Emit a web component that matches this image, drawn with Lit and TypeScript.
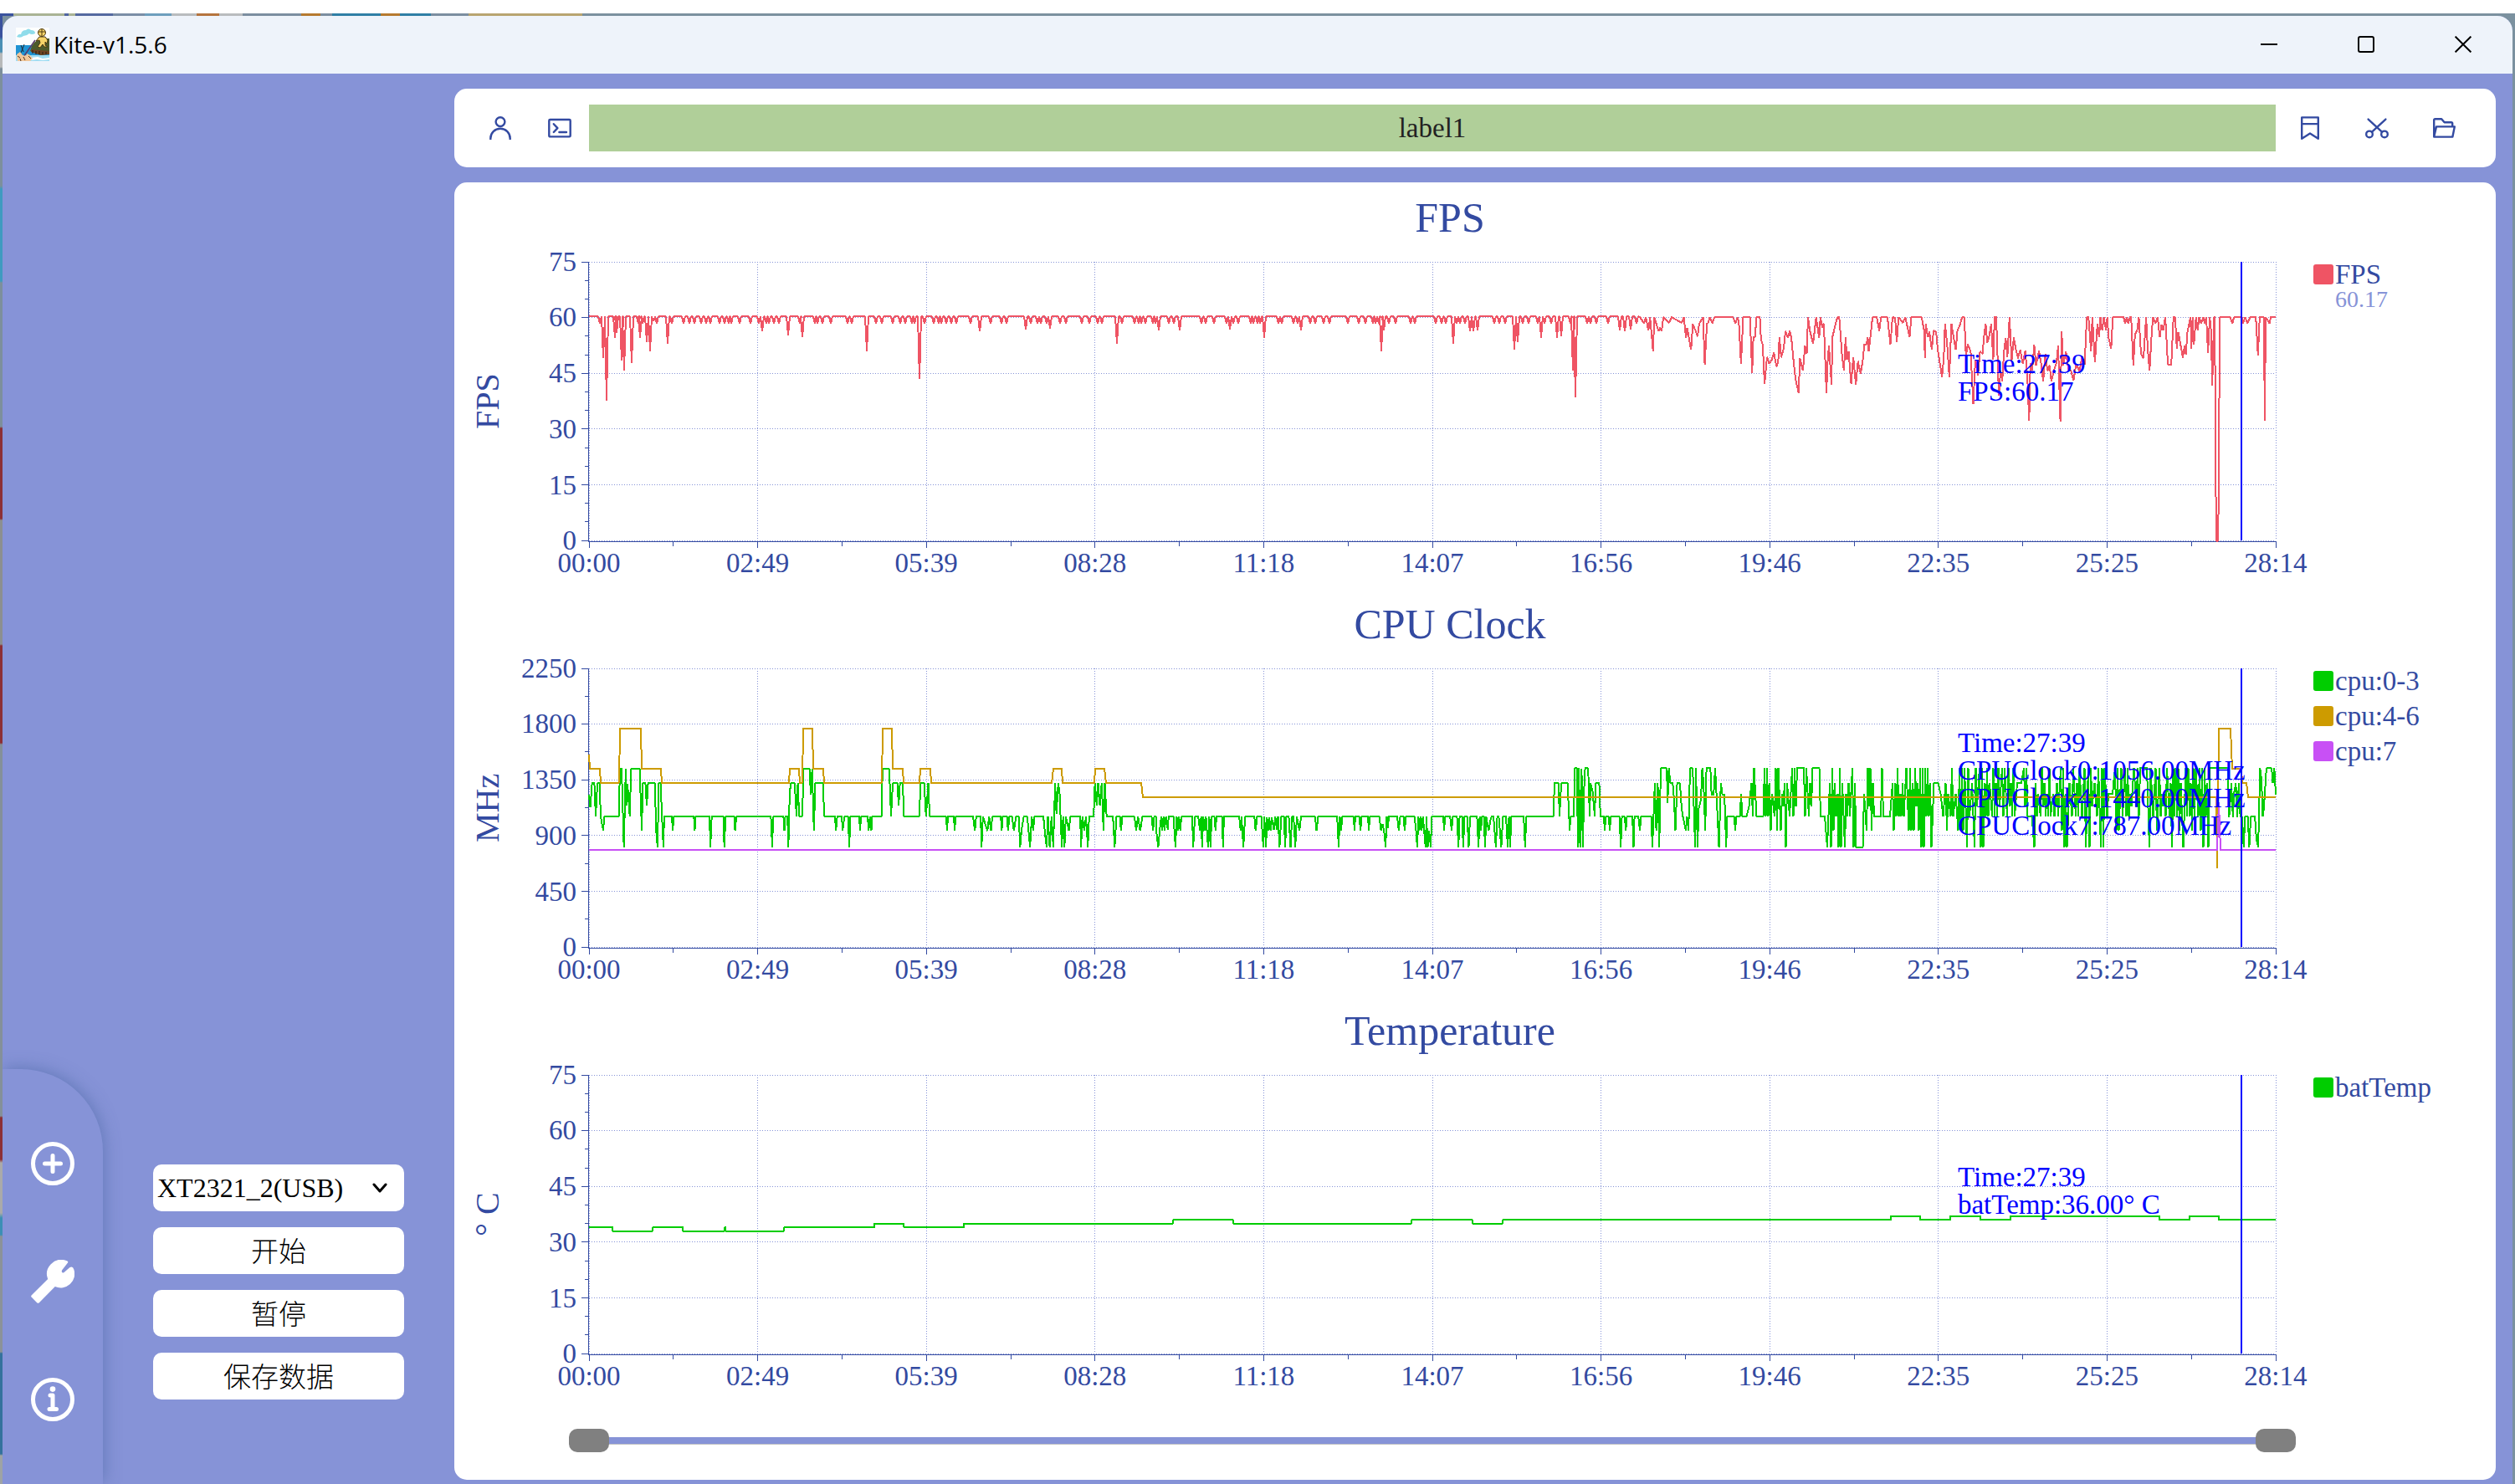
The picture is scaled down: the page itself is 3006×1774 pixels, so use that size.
import { LitElement, html, css, svg, nothing } from "lit";
import { customElement, property } from "lit/decorators.js";

type Point = [number, number];

interface Series {
  name: string;
  color: string;
  points: Point[];
  value?: string;
}

interface ChartSpec {
  title: string;
  unit: string;
  yLabels: string[];
  minorPerStep: number;
  series: Series[];
  readout: string[];
}

/* Every trace is kept in plot units: 2016 across, 333 down. */
const PLOT_W = 2016;
const PLOT_H = 333;
const CURSOR_X = 1975;
const TIMES = ["00:00", "02:49", "05:39", "08:28", "11:18", "14:07", "16:56", "19:46", "22:35", "25:25", "28:14"];

/* Reads "x,y x,y ..." and maps it into plot units. */
function trace(text: string, scaleX: number, offsetX: number, scaleY = 3, offsetY = 0): Point[] {
  return text
    .trim()
    .split(/\s+/)
    .map((pair) => {
      const [x, y] = pair.split(",").map(Number);
      return [x / scaleX + offsetX, y / scaleY + offsetY] as Point;
    });
}

/* A flat line at the frame cap with short drops; "x" alone is a small drop, "x:v" falls to v. */
const FPS_CAP = 60.3;
const fpsY = (v: number) => PLOT_H * (1 - v / 75);
function drops(text: string): Point[] {
  const out: Point[] = [[0, fpsY(FPS_CAP)]];
  for (const item of text.trim().split(/\s+/)) {
    const [x, v] = item.split(":").map(Number);
    out.push([x - 2, fpsY(FPS_CAP)], [x, fpsY(v || 58.4)], [x + 2, fpsY(FPS_CAP)]);
  }
  return out;
}

const fpsEarly = drops(`
  13 17:49 21:37.7 31:54.6 33:56 39:48.4 42:45.8 51:47.8 59 61:54.6 64 69:53.5 73:51 77:59 81 94:53 99 113 120 126 134 140 145
  156 162 167 170 180 193 203 207:56.3 212 215 221 227 238:55.2 252 255:54.7 270 273 279 289 309 314
  332:51 343 350 363 372 378 386 389 395:43.4 401 412 418 421 427 433 439 456 467:56.3 480 493 499
  522:56.7 528 536 540 547 551:57 563 570 589 598 608 613 631:53 637 652 657 660 665 674 677 681:56.5
  693 699 706:56.5 732 737 747 762 766:56.7 770 776 791 794 799 802 807:54.6 824 828 842 847 851:56.5
  862 868 878 885 907 920 928 937 940 944 947:51 950:56.5 956 964 982 987 1012 1019 1024 1033:53 1037
  1041 1047 1053:56.3 1057:56.3 1062:56.5 1082 1088 1095 1106:51.4 1110:53.3 1116 1123 1134 1138:54.6
  1142 1150 1157:54.6 1162:55 1173 1176:45.8 1179:38.5 1193 1197 1204 1218 1232:56.5 1238:56.3
  1245:56.7 1252
`);

const fpsLate = trace(`
  0,297 10,320 14,297 20,345 24,297 31,420 34,297 44,348 48,335 51,348 55,297 69,318 74,297 98,318
  103,297 108,372 111,335 115,372 120,415 124,322 131,348 135,367 139,322 148,297 152,468 157,322
  160,318 164,297 170,320 175,297 218,297 224,320 229,297 232,320 237,465 242,297 258,297 263,497
  266,370 270,368 273,297 281,297 284,380 288,395 292,538 298,440 303,465 309,450 314,425 320,475
  324,460 327,370 331,442 337,410 341,347 347,372 351,347 355,372 359,440 365,522 372,570 375,445
  382,490 387,400 391,430 394,297 398,345 406,393 413,297 420,372 423,297 427,335 431,320 437,570
  440,455 443,400 449,540 451,370 458,325 463,297 467,297 474,440 478,488 482,370 485,450 489,420
  495,538 500,440 506,540 511,455 517,500 522,455 526,395 531,395 534,370 536,420 540,370 545,297
  555,297 561,348 565,297 580,297 587,395 592,297 598,300 602,388 606,297 616,318 622,297 632,370
  636,297 660,297 666,345 668,445 670,322 675,370 678,348 684,415 688,345 694,350 698,415 708,513
  712,440 715,320 720,395 725,513 730,320 735,370 740,415 744,345 750,325 755,297 760,297 764,440
  768,395 775,420 781,610 786,450 792,508 797,420 803,430 806,370 810,320 814,390 818,370 823,322
  828,450 831,297 835,297 841,580 845,490 849,528 853,420 857,372 861,440 866,297 871,455 876,370
  881,415 886,445 891,415 897,465 903,418 908,520 912,670 915,463 919,490 924,397 928,470 935,418
  940,463 945,528 950,430 955,490 960,470 964,528 970,490 976,460 980,400 985,673 988,348 992,470
  998,420 1004,485 1010,490 1016,525 1022,465 1030,490 1036,440 1042,468 1047,297 1051,297 1057,420
  1060,297 1066,460 1072,320 1076,370 1079,297 1083,345 1087,297 1092,345 1095,297 1098,370 1104,412
  1108,297 1133,297 1137,320 1141,297 1144,320 1148,297 1151,297 1156,470 1160,360 1165,345 1169,297
  1174,430 1180,445 1186,297 1190,415 1194,490 1199,360 1202,297 1208,320 1213,297 1218,370 1222,325
  1226,345 1231,297 1237,468 1245,468 1250,297 1254,297 1258,410 1261,350 1266,390 1272,443 1276,400
  1279,432 1283,348 1290,297 1292,410 1295,297 1298,395 1303,297 1307,345 1310,297 1315,320 1320,297
  1323,320 1327,297 1331,425 1335,297 1338,345 1341,543 1345,297 1347,297 1349,900 1351,1100
  1355,1100 1357,660 1359,297 1383,297 1388,320 1392,297 1410,297 1413,320 1418,297 1423,320
  1430,297 1443,297 1448,435 1452,297 1462,297 1464,670 1466,297 1475,320 1478,297 1490,297
`, 1.96, 1256, 3, -33);

const littleA = trace(`
  306,750 309,795 313,708 318,708 321,828 325,708 330,708 332,828 338,880 340,828 373,828 375,657
  379,657 384,938 388,657 390,790 392,710 397,828 400,657 419,657 424,880 426,708 432,708 435,790
  438,708 453,708 456,880 459,938 462,708 466,708 469,828 472,938 474,828 491,828 493,880 495,828
  540,828 542,880 544,828 575,828 577,938 580,828 606,828 608,938 611,828 630,828 632,880 635,828
  712,828 715,938 717,828 740,828 742,880 744,828 749,828 751,938 754,740 757,708 765,708 769,828
  772,708 775,828 782,828 785,657 798,657 801,750 804,657 808,880 811,708 828,708 831,828 855,828
  857,880 860,828 870,828 872,880 876,828 884,828 887,938 889,828 909,828 911,880 913,828 928,828
  930,880 933,828 936,880 938,828 959,828 961,657 976,657 980,828 984,708 994,708 997,790 1000,708
  1006,708 1009,828 1043,828 1046,708 1054,708 1058,828 1063,708 1066,828 1103,828 1105,880 1107,828
  1120,828 1122,880 1124,828 1163,828 1167,880 1170,828 1180,828 1182,940 1185,828 1195,880 1199,828
  1203,880 1206,828 1225,828 1227,880 1229,828 1239,828 1241,880 1244,828 1250,828 1254,880 1259,828
  1265,828 1268,938 1271,880 1276,828 1284,828 1290,938 1294,828 1297,880 1300,828 1320,828 1323,880
  1327,938 1330,828 1334,938 1338,828 1342,938 1346,708 1349,820 1353,708 1356,740 1361,938 1364,828
  1367,938 1370,828 1377,880 1380,828 1402,828 1404,938 1407,828 1411,880 1415,828 1419,938 1422,828
  1432,828 1435,708 1439,790 1442,708 1446,790 1450,708 1454,880 1457,708 1461,828 1475,828 1479,938
  1483,828 1491,828 1493,880 1496,828 1523,828 1527,880 1531,828 1536,880 1541,828
`, 1.8667, -164, 3, -99);

const littleB = trace(`
  73,288 102,288 107,340 111,288 117,288 119,350 124,400 129,340 134,288 137,340 142,288 145,340
  150,288 156,335 159,288 175,288 182,398 186,288 190,340 194,288 198,340 202,288 238,288 241,398
  247,288 258,288 264,340 268,288 271,398 275,288 280,340 284,288 291,398 295,288 299,400 303,288
  312,288 316,338 319,288 338,288 341,398 344,288 395,288 400,340 403,288 409,400 415,288 446,288
  450,340 455,288 469,288 476,398 479,288 485,398 488,290 492,340 496,290 500,338 504,290 511,335
  516,288 521,335 525,288 530,400 536,288 545,288 549,398 553,288 561,288 567,400 572,288 577,288
  583,398 588,288 597,340 602,288 649,288 654,340 659,288 723,288 728,398 732,288 736,340 740,288
  778,288 781,338 784,288 797,288 801,338 805,288 826,288 829,338 832,288 864,288 870,340 875,315
  880,340 885,398 889,288 893,330 896,288 924,288 929,338 934,288 945,288 949,338 953,288 982,288
  987,340 991,398 995,288 998,340 1003,288 1006,338 1010,288 1014,335 1019,400 1022,288 1026,398
  1031,340 1036,398 1040,288 1078,288 1081,338 1084,288 1101,288 1106,338 1110,288 1124,288 1129,398
  1133,288 1141,288 1145,398 1149,288 1158,288 1163,400 1168,288 1191,288 1196,398 1200,288 1204,340
  1208,288 1214,288 1218,398 1222,288 1230,340 1236,300 1240,288 1246,288 1254,398 1259,288 1264,288
  1272,400 1278,288 1288,288 1294,398 1298,288 1302,398 1306,288 1347,288 1352,398 1356,288 1447,288
  1450,168 1464,168 1467,288 1473,168 1494,168 1501,338 1504,288 1513,288
`, 2.8, 636, 3, 81);

const littleC = trace(`
  227,588 230,415 237,415 241,698 244,415 248,700 253,418 257,698 262,468 265,415 275,415 280,588
  283,468 290,500 297,588 300,468 312,468 316,588 328,588 330,640 334,588 344,588 347,638 351,588
  380,588 384,698 388,588 397,588 401,638 405,588 423,588 427,698 430,588 443,588 448,638 452,588
  486,588 490,700 494,588 498,468 503,638 508,468 513,698 518,415 538,415 541,540 545,415 550,468
  558,468 562,520 567,638 573,468 582,468 588,560 592,588 602,638 606,588 611,638 616,415 625,415
  629,560 633,698 636,415 641,698 645,560 652,530 657,415 661,468 667,638 671,415 684,415 688,510
  695,510 700,415 705,520 713,700 719,468 724,510 731,510 737,698 740,588 764,588 767,638 771,588
  783,588
`, 2.8, 1096, 3, -19);

/* Under load the governor hops between clock steps on almost every sample. */
function hopping(from: number, to: number): Point[] {
  const upper = [119, 119, 119, 119, 137, 137, 150];
  const lower = [165, 177, 177, 177, 194, 194, 214, 214];
  const out: Point[] = [];
  let seed = 20231;
  const next = () => {
    seed = (seed * 1103515245 + 12345) % 2147483648;
    return seed / 2147483648;
  };
  for (let x = from; x < to; ) {
    const band = out.length % 2 === 0 ? upper : lower;
    const y = band[Math.floor(next() * band.length)];
    out.push([x, y]);
    const hold = next();
    if (hold > 0.96) {
      x += 5;
      out.push([x, y]);
    }
    x += hold > 0.75 ? 3 : 1.5;
  }
  return out;
}

const littleD = trace(`
  765,415 813,415 816,590 822,468 826,590 830,500 834,468 838,590 842,468 846,590 851,588 855,698
  859,588 866,588 870,698 874,588 885,588 889,668 894,698 899,415 903,460 906,588 909,560 916,415
  930,415 933,468 937,415 941,510
`, 2.24, 1596, 3, -19);

const middle = trace(`
  0,103 1,120 13,120 14,137 36,137 37,72 62,72 63,120 86,120 87,137 239,137 240,120 251,120 252,137
  255,137 256,72 267,72 268,120 280,120 281,137 350,137 351,72 362,72 363,120 375,120 376,137
  395,137 396,120 408,120 409,137 553,137 555,120 565,120 566,137 604,137 605,120 616,120 618,137
  660,137 662,154 1945,154 1946,239 1948,72 1962,72 1964,120 1975,120 1976,137 1981,137 1983,154
  2016,154
`, 1, 0, 1);

const prime = trace("0,217 1946,217 1948,160 1950,217 2016,217", 1, 0, 1);

/* Battery temperature as steps: the value holds from each x to the next. */
const batterySteps: Point[] = [
  [0, 34], [28, 33], [76, 34], [112, 33], [162, 34], [163, 33], [233, 34], [341, 35], [376, 34],
  [448, 35], [698, 36], [770, 35], [983, 36], [1056, 35], [1092, 36], [1556, 37], [1591, 36],
  [1627, 37], [1663, 36], [1699, 37], [1877, 36], [1913, 37], [1948, 36], [2016, 36],
];
const battery = batterySteps.flatMap(([x, v], i): Point[] => {
  const y = PLOT_H * (1 - v / 75);
  const prev = i ? PLOT_H * (1 - batterySteps[i - 1][1] / 75) : y;
  return [[x, prev], [x, y]];
});

const CHARTS: ChartSpec[] = [
  {
    title: "FPS",
    unit: "FPS",
    yLabels: ["75", "60", "45", "30", "15", "0"],
    minorPerStep: 3,
    series: [{ name: "FPS", color: "#ef5464", points: [...fpsEarly, ...fpsLate], value: "60.17" }],
    readout: ["Time:27:39", "FPS:60.17"],
  },
  {
    title: "CPU Clock",
    unit: "MHz",
    yLabels: ["2250", "1800", "1350", "900", "450", "0"],
    minorPerStep: 2,
    series: [
      { name: "cpu:0-3", color: "#00cd00", points: [...littleA, ...littleB, ...littleC, ...hopping(1377, 1936), ...littleD] },
      { name: "cpu:4-6", color: "#cd9b00", points: middle },
      { name: "cpu:7", color: "#c850f5", points: prime },
    ],
    readout: ["Time:27:39", "CPUClock0:1056.00MHz", "CPUClock4:1440.00MHz", "CPUClock7:787.00MHz"],
  },
  {
    title: "Temperature",
    unit: "° C",
    yLabels: ["75", "60", "45", "30", "15", "0"],
    minorPerStep: 3,
    series: [{ name: "batTemp", color: "#00cd00", points: battery }],
    readout: ["Time:27:39", "batTemp:36.00° C"],
  },
];

@customElement("kite-chart")
export class KiteChart extends LitElement {
  @property({ attribute: false }) spec!: ChartSpec;

  static styles = css`
    :host {
      display: grid;
      grid-template-columns: 161px minmax(0, 1fr) 263px;
      grid-template-rows: 95px 334px 57px;
      color: #334aa1;
      font-family: "Liberation Serif", "Noto Sans CJK SC", serif;
      font-size: 33px;
    }
    .title {
      grid-column: 2;
      margin: 0;
      padding-left: 42px;
      font-size: 50px;
      font-weight: 400;
      line-height: 84px;
      text-align: center;
    }
    .scale {
      grid-column: 1;
      grid-row: 2;
      display: flex;
      justify-content: space-between;
      padding-right: 15px;
    }
    .unit {
      width: 80px;
      line-height: 80px;
      font-size: 40px;
      text-align: center;
      writing-mode: vertical-rl;
      transform: rotate(180deg);
    }
    .y-labels {
      display: flex;
      flex-direction: column;
      justify-content: space-between;
      align-items: flex-end;
    }
    .y-label {
      display: flex;
      align-items: center;
      height: 0;
    }
    .plot {
      grid-column: 2;
      grid-row: 2;
      position: relative;
    }
    .canvas {
      display: block;
      width: 100%;
      height: 333px;
      overflow: visible;
      shape-rendering: crispEdges;
    }
    .canvas * {
      vector-effect: non-scaling-stroke;
    }
    .grid-line {
      stroke: #8693d7;
      stroke-width: 1;
      stroke-dasharray: 1 2;
    }
    .axis {
      stroke: #334aa1;
      stroke-width: 1;
    }
    .trace {
      fill: none;
      stroke-width: 2;
      stroke-linejoin: bevel;
    }
    .cursor {
      stroke: #0000ff;
      stroke-width: 2;
    }
    .readout {
      position: absolute;
      left: 81.15%;
      top: 139px;
      transform: translateY(-50%);
      color: #0000ff;
      line-height: 33px;
      white-space: nowrap;
    }
    .x-labels {
      grid-column: 2;
      grid-row: 3;
      display: flex;
      justify-content: space-between;
      line-height: 52px;
    }
    .x-label {
      display: flex;
      justify-content: center;
      width: 0;
    }
    .legend {
      grid-column: 3;
      grid-row: 2;
      display: flex;
      flex-direction: column;
      gap: 12px;
      margin: 0;
      padding: 0 0 0 45px;
      list-style: none;
      line-height: 30px;
    }
    .entry {
      display: grid;
      grid-template-columns: 24px 1fr;
      column-gap: 2px;
      align-items: center;
    }
    .swatch {
      width: 24px;
      height: 24px;
      border-radius: 3px;
    }
    .value {
      grid-column: 2;
      color: #8693d7;
      font-size: 28px;
    }
  `;

  private gridLines() {
    const rows = [0, 1, 2, 3, 4, 5].map((i) => (i * PLOT_H) / 5);
    const cols = TIMES.map((_, i) => (i * PLOT_W) / 10);
    const minorRows: number[] = [];
    const n = this.spec.minorPerStep;
    for (let i = 0; i < 5 * n; i++) if (i % n) minorRows.push((i * PLOT_H) / (5 * n));
    return svg`
      ${rows.map((y) => svg`<line class="grid-line" x1="0" x2=${PLOT_W} y1=${y} y2=${y} />
        <line class="axis" x1="-9" x2="-1" y1=${y} y2=${y} />`)}
      ${minorRows.map((y) => svg`<line class="axis" x1="-5" x2="-1" y1=${y} y2=${y} />`)}
      ${cols.map((x) => svg`<line class="grid-line" x1=${x} x2=${x} y1="0" y2=${PLOT_H} />
        <line class="axis" x1=${x} x2=${x} y1="334" y2="342" />`)}
      ${cols.slice(0, 10).map((x) => svg`<line class="axis" x1=${x + PLOT_W / 20} x2=${x + PLOT_W / 20} y1="334" y2="340" />`)}
      <line class="axis" x1="-1" x2="-1" y1="0" y2="334" />
      <line class="axis" x1="-1" x2=${PLOT_W} y1="334" y2="334" />`;
  }

  render() {
    const { title, unit, yLabels, series, readout } = this.spec;
    return html`
      <h2 class="title">${title}</h2>
      <div class="scale">
        <div class="unit">${unit}</div>
        <div class="y-labels">${yLabels.map((t) => html`<span class="y-label">${t}</span>`)}</div>
      </div>
      <div class="plot">
        <svg class="canvas" viewBox="0 0 2016 333" preserveAspectRatio="none" role="img" aria-label=${title}>
          ${this.gridLines()}
          ${series.map((s) => svg`<polyline class="trace" stroke=${s.color}
            points=${s.points.map(([x, y]) => `${x.toFixed(1)},${y.toFixed(1)}`).join(" ")} />`)}
          <line class="cursor" x1=${CURSOR_X} x2=${CURSOR_X} y1="0" y2=${PLOT_H} />
        </svg>
        <div class="readout">${readout.map((t) => html`<div>${t}</div>`)}</div>
      </div>
      <ul class="legend">
        ${series.map((s) => html`<li class="entry">
          <span class="swatch" style="background:${s.color}"></span><span>${s.name}</span>
          ${s.value ? html`<span class="value">${s.value}</span>` : nothing}
        </li>`)}
      </ul>
      <div class="x-labels">${TIMES.map((t) => html`<span class="x-label">${t}</span>`)}</div>
    `;
  }
}

const icons = {
  user: svg`<circle cx="14" cy="6.6" r="5.4" /><path d="M2.3 27.4v-1a11.7 11.6 0 0 1 23.4 0v1" />`,
  terminal: svg`<rect x="1.3" y="4" width="25.4" height="20.4" rx="1.2" /><path d="M6.8 9.2l4.6 4.9-4.6 4.9M13.4 19h8.6" />`,
  bookmark: svg`<path d="M4.2 1.4h19.6v25.4L14 20.4l-9.8 6.4zM4.2 9.1h19.6" />`,
  cut: svg`<circle cx="5" cy="21.4" r="3.8" /><circle cx="23" cy="21.4" r="3.8" /><path d="M3.6 3.6l16.6 15.2M24.4 3.6L7.8 18.8" />`,
  folder: svg`<path d="M2.2 24.6V4.6q0-1.4 1.4-1.4h7.6l3.4 4h8.2q1.4 0 1.4 1.4v3.6M2.2 24.6L5 12.4h21.8l-2.4 12.2z" />`,
};

@customElement("app-root")
export class AppRoot extends LitElement {
  static styles = css`
    :host {
      display: block;
      font-family: "Liberation Serif", "Noto Sans CJK SC", serif;
      font-size: 33px;
    }
    * {
      box-sizing: border-box;
    }
    button,
    select {
      font: inherit;
      color: #000;
      border: 0;
      margin: 0;
      padding: 0;
      background: none;
      cursor: pointer;
    }
    .desktop {
      display: grid;
      min-height: 100vh;
      padding-top: 16px;
      background: #fff;
    }
    .wallpaper {
      display: grid;
      padding: 3px 3px 0;
      background:
        linear-gradient(90deg, #3a529e 0 16px, #a9b394 16px 77px, #4f64a0 77px 82px, #a9b394 82px 90px,
          #5469a0 90px 135px, #7b8ea6 135px 173px, #6e9fbd 173px 205px, #b9bcbe 205px 235px, #b5743e 235px 262px,
          #b9bcbe 262px 290px, #7c8ea0 290px 360px, #b67a30 360px 383px, #7c8ea0 383px 397px, #2f7fa5 397px 455px,
          #b67a30 455px 478px, #2f7fa5 478px 515px, #7c8ea0 515px 560px, #b8a470 560px 696px, #7b919f 696px)
          top / 100% 3px no-repeat,
        linear-gradient(#3a529e 0 28px, #4a8fb4 32px 46px, #b7b9ba 48px 64px, #7d8f9c 66px 206px, #3f9bc0 210px 320px,
          #7d8f9c 322px 494px, #8c3036 496px 604px, #8c8f90 606px 754px, #8c3036 756px 872px, #84909a 874px 1318px,
          #8c3036 1320px 1370px, #aaa 1374px 1434px, #3c8fb5 1440px 1460px, #8b9299 1462px 1600px, #34729c 1602px 1722px,
          #9ea3a5 1724px)
          left / 3px 100% no-repeat,
        #7b919f;
    }
    .window {
      display: flex;
      flex-direction: column;
      overflow: hidden;
      border-radius: 18px 18px 0 0;
      background: #8693d7;
    }
    .title-bar {
      display: flex;
      align-items: center;
      height: 69px;
      padding: 0 1px 2px 16px;
      background: #eef3fa;
      font-family: "Open Sans", sans-serif;
      font-size: 28px;
    }
    .logo {
      width: 40px;
      height: 40px;
      margin-right: 5px;
    }
    .app-name {
      flex: 1;
      margin: 0;
      font-size: inherit;
      font-weight: 400;
      color: #000;
    }
    .window-button {
      display: grid;
      place-items: center;
      width: 116px;
      height: 67px;
    }
    .window-button svg {
      width: 20px;
      height: 20px;
      fill: none;
      stroke: #000;
      stroke-width: 2;
    }
    .body {
      flex: 1;
      display: grid;
      grid-template-columns: 540px minmax(0, 1fr);
    }
    .sidebar {
      display: flex;
      align-items: flex-end;
      gap: 60px;
    }
    .rail {
      display: flex;
      flex-direction: column;
      align-items: center;
      gap: 81px;
      width: 120px;
      padding: 83px 0 71px;
      border-top-right-radius: 98px;
      background: #8693d7;
      box-shadow: 2px -2px 18px rgba(70, 100, 160, 0.5);
    }
    .rail-button {
      display: grid;
      place-items: center;
      width: 60px;
      height: 60px;
    }
    .rail-button svg {
      width: 52px;
      height: 52px;
      fill: none;
      stroke: #fff;
      stroke-width: 5;
      stroke-linecap: round;
      stroke-linejoin: round;
    }
    .rail-button .solid {
      fill: #fff;
      stroke: none;
    }
    .actions {
      display: grid;
      gap: 19px;
      width: 300px;
      padding-bottom: 101px;
    }
    .action,
    .device select {
      width: 100%;
      height: 56px;
      border-radius: 10px;
      background: #fff;
    }
    .action {
      padding-bottom: 3px;
      font-weight: 300;
    }
    .device {
      display: grid;
      align-items: center;
    }
    .device > * {
      grid-area: 1 / 1;
    }
    .device select {
      appearance: none;
      padding-left: 5px;
      font-size: 32px;
    }
    .chevron {
      justify-self: end;
      width: 18px;
      height: 12px;
      margin-right: 20px;
      fill: none;
      stroke: #000;
      stroke-width: 3;
      stroke-linecap: round;
      stroke-linejoin: round;
      pointer-events: none;
    }
    .content {
      display: flex;
      flex-direction: column;
      gap: 18px;
      padding: 18px 20px 5px 0;
    }
    .card {
      border-radius: 15px;
      background: #fff;
    }
    .toolbar {
      display: grid;
      grid-template-columns: 161px minmax(0, 1fr) 263px;
      align-items: center;
      height: 94px;
    }
    .tools {
      display: flex;
      gap: 15px;
      padding-left: 27px;
    }
    .tools-end {
      gap: 24px;
      padding-left: 13px;
    }
    .tool {
      display: grid;
      place-items: center;
      width: 56px;
      height: 56px;
    }
    .tool svg {
      width: 28px;
      height: 28px;
      fill: none;
      stroke: #334aa1;
      stroke-width: 2.4;
      stroke-linecap: round;
      stroke-linejoin: round;
    }
    .range-label {
      height: 56px;
      line-height: 56px;
      background: #b0cf99;
      color: #222;
      text-align: center;
    }
    .charts {
      flex: 1;
    }
    .range {
      display: grid;
      margin: 32px 239px 33px 137px;
    }
    .range input {
      grid-area: 1 / 1;
      appearance: none;
      width: 100%;
      height: 28px;
      margin: 0;
      background: none;
      pointer-events: none;
    }
    .range input::-webkit-slider-runnable-track {
      height: 8px;
    }
    .range .start::-webkit-slider-runnable-track {
      background: #8693d7;
      box-shadow: 0 1px #c4c4c4;
    }
    .range input::-webkit-slider-thumb {
      appearance: none;
      width: 48px;
      height: 28px;
      margin-top: -10px;
      border-radius: 10px;
      background: #808080;
      pointer-events: auto;
    }
  `;

  private tool(label: string, icon: unknown) {
    return html`<button class="tool" type="button" aria-label=${label}>
      <svg viewBox="0 0 28 28" aria-hidden="true">${icon}</svg>
    </button>`;
  }

  private titleBar() {
    return html`<header class="title-bar">
      <svg class="logo" viewBox="0 0 40 40" aria-hidden="true">
        <rect width="40" height="40" fill="#fdfefe" />
        <rect y="21" width="40" height="13" fill="#1f93d3" />
        <rect y="33" width="40" height="7" fill="#9fdcf3" />
        <path d="M1 11q2-4 5-3 1-5 6-5 3-3 6 0 5 0 5 4-4 2-7 0-3 3-7 3-3 3-8 1z" fill="#8fdcea" />
        <path d="M4 36l8-2 6 2 8-1 6 2 8-1v2l-8 1-7-1-7 1-6-2-9 2z" fill="#fff" />
        <path d="M17 28q3-13 14-15h9v18l-10 2z" fill="#4c5a2b" />
        <path d="M18 26l22 2v4l-10 1-12-4z" fill="#6d4423" />
        <path d="M20 27v4M24 28v4M28 28v4M32 29v3M36 29v3" stroke="#2a1a10" />
        <circle cx="31" cy="6" r="4.5" fill="#f6d469" stroke="#4d3a12" />
        <path d="M31 2v8M27 5h8" stroke="#4d3a12" />
        <path d="M28 11h7l3 4-1 4-2-2v4l3 2h-4l-2-3-3 4-3-1 3-5-1-3-4 1z" fill="#f6d469" stroke="#4d3a12" />
        <path d="M23 15L7 38" stroke="#5a3b6a" stroke-width="1.5" />
        <path d="M6 21l3 8M10 20l-4 10" stroke="#1d2b33" />
        <path d="M1 32l4-3 3 4 4 1 1-3 4 2 3 4-3 3H2z" fill="#f1c79a" />
        <path d="M2 34l3 2M9 35l2 4M15 34l3 3M5 37l1 3" stroke="#54331c" />
      </svg>
      <h1 class="app-name">Kite-v1.5.6</h1>
      <button class="window-button" type="button" aria-label="Minimize">
        <svg viewBox="0 0 20 20"><path d="M0 10h20" /></svg>
      </button>
      <button class="window-button" type="button" aria-label="Maximize">
        <svg viewBox="0 0 20 20"><rect x="1" y="1" width="18" height="18" rx="2" /></svg>
      </button>
      <button class="window-button" type="button" aria-label="Close">
        <svg viewBox="0 0 20 20"><path d="M.6.6l18.8 18.8M19.4.6L.6 19.4" /></svg>
      </button>
    </header>`;
  }

  private sidebar() {
    return html`<aside class="sidebar">
      <nav class="rail">
        <button class="rail-button" type="button" aria-label="Add">
          <svg viewBox="0 0 52 52"><circle cx="26" cy="26" r="23.5" /><path d="M16.5 26h19M26 16.5v19" /></svg>
        </button>
        <button class="rail-button" type="button" aria-label="Tools">
          <svg viewBox="0 0 52 52">
            <path class="solid" d="M44 3.5L37 12.6q-1 3 2 3L46.5 9q3.5-2 4.8 2.5A16.6 16.6 0 0 1 28.8 32L9.8 51.2q-1.3 1.3-2.6 0L.8 44.8q-1.3-1.3 0-2.6L20.2 23A17 17 0 0 1 41.5.8q3.8.8 2.5 2.7z" />
          </svg>
        </button>
        <button class="rail-button" type="button" aria-label="About">
          <svg viewBox="0 0 52 52">
            <circle cx="26" cy="26" r="23.5" />
            <circle class="solid" cx="26" cy="13.6" r="3.3" />
            <path d="M23 21h3v16.5M22 37.5h8.5" />
          </svg>
        </button>
      </nav>
      <div class="actions">
        <div class="device">
          <select aria-label="Device">
            <option>XT2321_2(USB)</option>
          </select>
          <svg class="chevron" viewBox="0 0 18 12" aria-hidden="true"><path d="M2 2l7 8 7-8" /></svg>
        </div>
        <button class="action" type="button">开始</button>
        <button class="action" type="button">暂停</button>
        <button class="action" type="button">保存数据</button>
      </div>
    </aside>`;
  }

  render() {
    return html`<div class="desktop">
      <div class="wallpaper">
        <div class="window">
          ${this.titleBar()}
          <div class="body">
            ${this.sidebar()}
            <main class="content">
              <section class="card toolbar">
                <div class="tools">${this.tool("User", icons.user)}${this.tool("Console", icons.terminal)}</div>
                <div class="range-label">label1</div>
                <div class="tools tools-end">
                  ${this.tool("Bookmark", icons.bookmark)}${this.tool("Cut", icons.cut)}${this.tool("Open", icons.folder)}
                </div>
              </section>
              <section class="card charts">
                ${CHARTS.map((spec) => html`<kite-chart .spec=${spec}></kite-chart>`)}
                <div class="range">
                  <input class="start" type="range" min="0" max="1694" value="0" aria-label="Range start" />
                  <input class="end" type="range" min="0" max="1694" value="1694" aria-label="Range end" />
                </div>
              </section>
            </main>
          </div>
        </div>
      </div>
    </div>`;
  }
}
